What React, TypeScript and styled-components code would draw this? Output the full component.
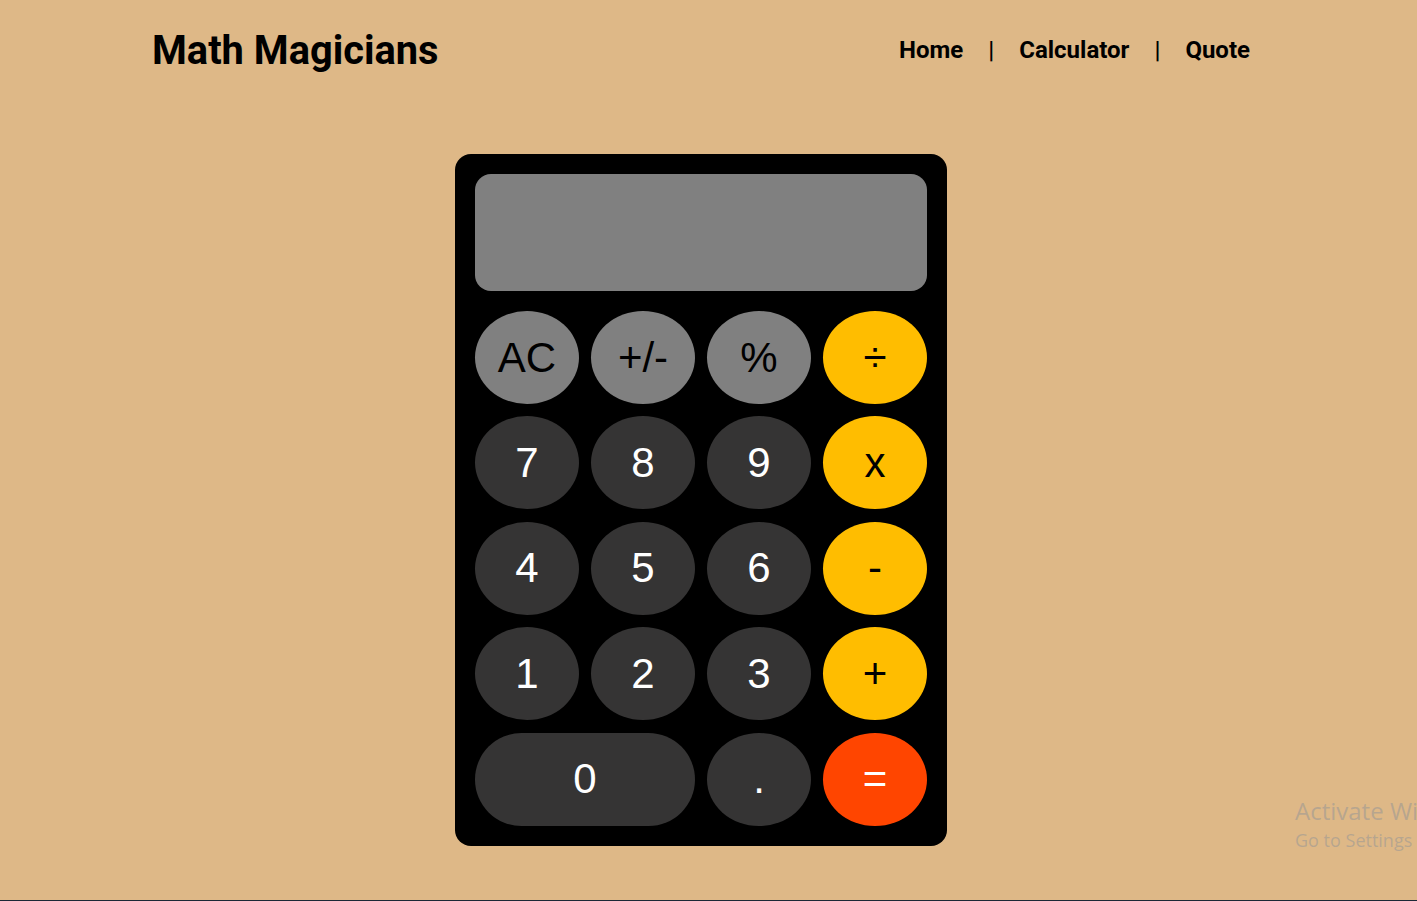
import React from 'react';
import styled, { createGlobalStyle } from 'styled-components';

const Global = createGlobalStyle`
  html, body { margin: 0; padding: 0; }
  body {
    background: #deb887;
    font-family: Roboto, "Liberation Sans", sans-serif;
    height: 901px;
    overflow: hidden;
  }
`;

const Page = styled.div`
  width: 100%;
  height: 900px;
  border-bottom: 1px solid #1c2836;
  position: relative;
  overflow: hidden;
`;

const Content = styled.div`
  width: 1402px;
`;

const Header = styled.header`
  display: flex;
  align-items: center;
  justify-content: space-between;
  padding: 26px 152px 0 152px;
  height: 48px;
`;

const Logo = styled.h1`
  margin: 0;
  font-family: Roboto, sans-serif;
  font-weight: 700;
  font-size: 39.8px;
  color: #000;
`;

const Nav = styled.nav`
  display: flex;
  align-items: center;
  font-family: Roboto, sans-serif;
  font-weight: 700;
  font-size: 24px;
  color: #000;
`;

const NavLink = styled.a`
  color: #000;
  text-decoration: none;
`;

const Sep = styled.span`
  margin: 0 25px;
  font-weight: 500;
`;

const Main = styled.main`
  display: flex;
  justify-content: center;
  padding-top: 80px;
`;

const Calc = styled.div`
  width: 452px;
  background: #000;
  border-radius: 16px;
  padding: 20px;
  display: flex;
  flex-direction: column;
  gap: 20px;
`;

const Display = styled.div`
  height: 117px;
  background: #808080;
  border-radius: 16px;
`;

const Keypad = styled.div`
  display: grid;
  grid-template-columns: repeat(4, 104px);
  grid-auto-rows: 93px;
  column-gap: 12px;
  row-gap: 12.4px;
`;

type Kind = 'func' | 'num' | 'op' | 'eq';

const bg: Record<Kind, string> = {
  func: '#808080',
  num: '#353434',
  op: '#ffbd00',
  eq: '#ff4500',
};
const fg: Record<Kind, string> = {
  func: '#000',
  num: '#fff',
  op: '#000',
  eq: '#fff',
};

const Key = styled.button<{ $kind: Kind; $wide?: boolean }>`
  grid-column: ${(p) => (p.$wide ? 'span 2' : 'auto')};
  border: none;
  border-radius: ${(p) => (p.$wide ? '47px' : '50%')};
  background: ${(p) => bg[p.$kind]};
  color: ${(p) => fg[p.$kind]};
  font-family: "Liberation Sans", Arial, sans-serif;
  font-size: 42px;
  display: flex;
  align-items: center;
  justify-content: center;
  padding: 0;
  cursor: pointer;
`;

const Watermark = styled.div`
  position: absolute;
  left: 1295px;
  top: 795px;
  color: rgba(150, 150, 150, 0.55);
  font-family: "Open Sans", "Noto Sans", sans-serif;
  white-space: nowrap;
  pointer-events: none;
`;
const WmTitle = styled.div`
  font-size: 24px;
  line-height: 32px;
`;
const WmSub = styled.div`
  font-size: 18px;
  line-height: 26px;
`;

const keys: { label: string; kind: Kind; wide?: boolean }[] = [
  { label: 'AC', kind: 'func' },
  { label: '+/-', kind: 'func' },
  { label: '%', kind: 'func' },
  { label: '÷', kind: 'op' },
  { label: '7', kind: 'num' },
  { label: '8', kind: 'num' },
  { label: '9', kind: 'num' },
  { label: 'x', kind: 'op' },
  { label: '4', kind: 'num' },
  { label: '5', kind: 'num' },
  { label: '6', kind: 'num' },
  { label: '-', kind: 'op' },
  { label: '1', kind: 'num' },
  { label: '2', kind: 'num' },
  { label: '3', kind: 'num' },
  { label: '+', kind: 'op' },
  { label: '0', kind: 'num', wide: true },
  { label: '.', kind: 'num' },
  { label: '=', kind: 'eq' },
];

export default function App() {
  return (
    <>
      <Global />
      <Page>
        <Content>
          <Header>
            <Logo>Math Magicians</Logo>
            <Nav>
              <NavLink href="#">Home</NavLink>
              <Sep>|</Sep>
              <NavLink href="#">Calculator</NavLink>
              <Sep>|</Sep>
              <NavLink href="#">Quote</NavLink>
            </Nav>
          </Header>
          <Main>
            <Calc>
              <Display />
              <Keypad>
                {keys.map((k) => (
                  <Key key={k.label} $kind={k.kind} $wide={k.wide}>
                    {k.label}
                  </Key>
                ))}
              </Keypad>
            </Calc>
          </Main>
        </Content>
        <Watermark>
          <WmTitle>Activate Windows</WmTitle>
          <WmSub>Go to Settings to activate Windows.</WmSub>
        </Watermark>
      </Page>
    </>
  );
}
